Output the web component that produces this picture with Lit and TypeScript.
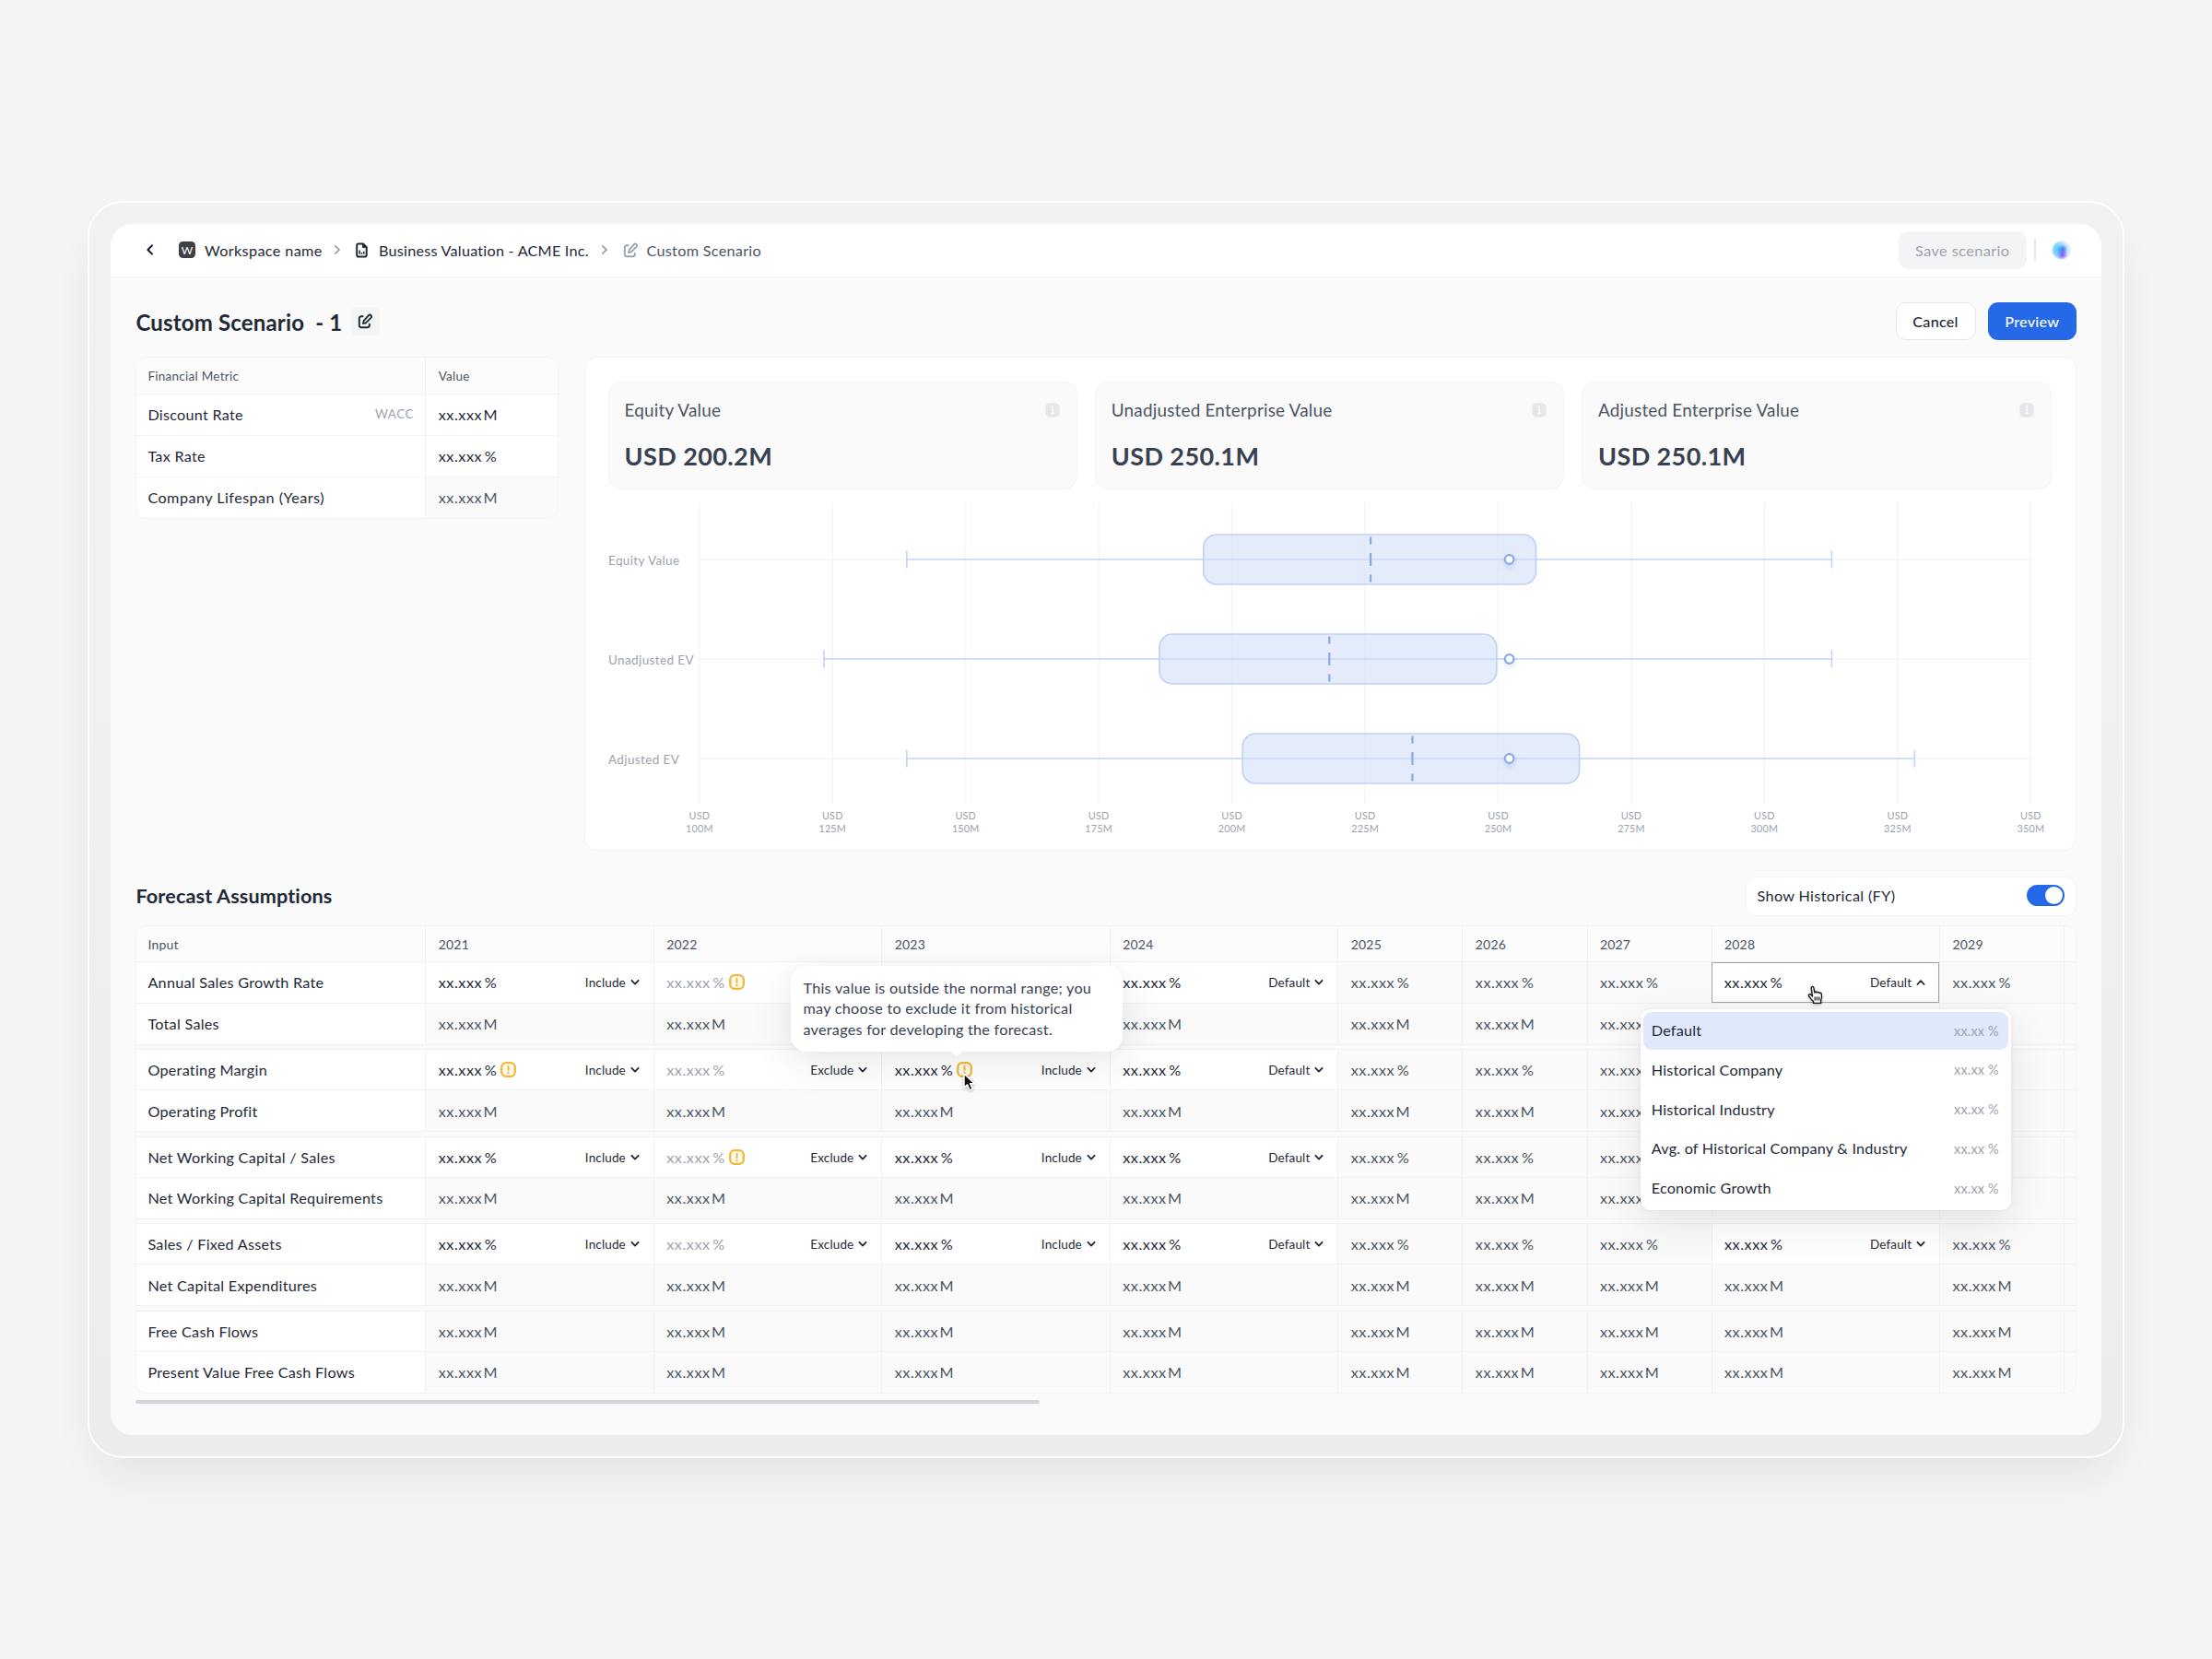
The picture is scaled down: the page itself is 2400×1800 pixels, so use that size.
import { LitElement, html, css, svg, nothing } from "lit";
import { customElement, property } from "lit/decorators.js";
import { classMap } from "lit/directives/class-map.js";

type Cell = {
  value?: string;
  mode?: string;
  muted?: boolean;
  warn?: boolean;
  open?: boolean;
};
type Row = { label: string; cells: Cell[] };

const PCT = "xx.xxx %";
const MIL = "xx.xxx M";
const YEARS = ["2021", "2022", "2023", "2024", "2025", "2026", "2027", "2028", "2029"];

const edit = (mode: string, extra: Partial<Cell> = {}): Cell => ({ value: PCT, mode, ...extra });
const read = (value: string, n: number): Cell[] => Array.from({ length: n }, () => ({ value }));
const blank: Cell = {};

const GROUPS: Row[][] = [
  [
    {
      label: "Annual Sales Growth Rate",
      cells: [
        edit("Include"),
        { value: PCT, mode: "", muted: true, warn: true },
        { mode: "" },
        edit("Default"),
        ...read(PCT, 3),
        edit("Default", { open: true }),
        ...read(PCT, 1),
      ],
    },
    { label: "Total Sales", cells: [...read(MIL, 2), blank, ...read(MIL, 4), blank, blank] },
  ],
  [
    {
      label: "Operating Margin",
      cells: [
        edit("Include", { warn: true }),
        edit("Exclude", { muted: true }),
        edit("Include", { warn: true }),
        edit("Default"),
        ...read(PCT, 3),
        blank,
        blank,
      ],
    },
    { label: "Operating Profit", cells: [...read(MIL, 7), blank, blank] },
  ],
  [
    {
      label: "Net Working Capital / Sales",
      cells: [
        edit("Include"),
        edit("Exclude", { muted: true, warn: true }),
        edit("Include"),
        edit("Default"),
        ...read(PCT, 3),
        blank,
        blank,
      ],
    },
    { label: "Net Working Capital Requirements", cells: [...read(MIL, 7), blank, blank] },
  ],
  [
    {
      label: "Sales / Fixed Assets",
      cells: [
        edit("Include"),
        edit("Exclude", { muted: true }),
        edit("Include"),
        edit("Default"),
        ...read(PCT, 3),
        edit("Default"),
        ...read(PCT, 1),
      ],
    },
    { label: "Net Capital Expenditures", cells: read(MIL, 9) },
  ],
  [
    { label: "Free Cash Flows", cells: read(MIL, 9) },
    { label: "Present Value Free Cash Flows", cells: read(MIL, 9) },
  ],
];

const chevron = (up = false) => html`<svg width="10" height="8" viewBox="0 0 10 8" fill="none">
  <path d=${up ? "M1.4 6 5 2.2 8.6 6" : "M1.4 1.8 5 5.6 8.6 1.8"} stroke="#1f2937" stroke-width="1.8" stroke-linecap="round" stroke-linejoin="round" />
</svg>`;

const crumbArrow = html`<svg width="8" height="12" viewBox="0 0 8 12" fill="none">
  <path d="M1.8 1.8 6 6 1.8 10.2" stroke="#9ca3af" stroke-width="1.8" stroke-linecap="round" stroke-linejoin="round" />
</svg>`;

const pencil = (color: string) => html`<svg width="17" height="17" viewBox="0 0 17 17" fill="none" stroke=${color} stroke-width="1.9" stroke-linecap="round" stroke-linejoin="round">
  <path d="M5.6 3.2H4A2.2 2.2 0 0 0 1.8 5.4V13A2.2 2.2 0 0 0 4 15.2H10.6A2.2 2.2 0 0 0 12.8 13V11.6" />
  <path d="M12 2.2a1.7 1.7 0 0 1 2.6 2.4L8.9 10.4 6 11.1 6.6 8.1z" />
</svg>`;

const warnIcon = html`<svg width="17" height="17" viewBox="0 0 17 17" fill="none">
  <rect x="1.2" y="1.2" width="14.6" height="14.6" rx="4.8" fill="#fffaf0" stroke="#f0ba38" stroke-width="2.3" />
  <path d="M8.5 4.8v4.2" stroke="#f0ba38" stroke-width="2" stroke-linecap="round" />
  <circle cx="8.5" cy="11.9" r="1.2" fill="#f0ba38" />
</svg>`;

const infoIcon = html`<svg width="16" height="16" viewBox="0 0 16 16">
  <rect x="0.3" y="0.3" width="15.4" height="15.4" rx="4.6" fill="#e5e7eb" />
  <circle cx="7.9" cy="4.6" r="1.1" fill="#fff" />
  <path d="M6.7 7.2H8.3V11.3M6.5 11.5H9.7" stroke="#fff" stroke-width="1.4" fill="none" />
</svg>`;

const arrowCursor = html`<svg width="18" height="24" viewBox="0 0 18 24">
  <path d="M2 2V17.2L5.5 13.9 8.2 19.8 11.2 18.4 8.6 12.8H13.2Z" fill="#111" stroke="#fff" stroke-width="1.5" stroke-linejoin="round" />
</svg>`;

const handCursor = html`<svg width="20" height="22" viewBox="0 0 20 22">
  <path d="M5.2 3.1C5 1.4 7.4 1 7.8 2.6L8.9 8C9 6.8 11 6.6 11.3 8 11.7 7 13.5 7.1 13.8 8.5 14.4 7.8 16.1 8.2 16.3 9.7 16.8 12 17 14 15.6 16.4V19.4H7.6V17.6C5.6 15.9 4 13.8 2.6 11.6 1.8 10.1 3.6 9.2 4.8 10.3L6.6 12.1Z" fill="#fff" stroke="#1a1a1a" stroke-width="1.4" stroke-linejoin="round" />
  <path d="M9.2 12.6V16.6M11.4 12.6V16.6M13.6 12.6V16.6" stroke="#1a1a1a" stroke-width="1.2" />
</svg>`;

@customElement("valuation-chart")
export class ValuationChart extends LitElement {
  static styles = css`
    :host { display: block; }
    svg { display: block; }
    text { font-family: Lato, "Open Sans", sans-serif; font-weight: 400; fill: #9ca3af; }
    .name { font-size: 13.5px; letter-spacing: 0.38px; }
    .tick { font-size: 10.8px; letter-spacing: 0.2px; text-anchor: middle; }
    .grid { stroke: #f5f6f8; stroke-width: 1.6; }
    .whisker { stroke: #c3d5f4; stroke-width: 1.6; fill: none; }
    .box { fill: rgba(208, 220, 248, 0.58); stroke: #c0d3f3; stroke-width: 1.7; }
    .median { stroke: #86a9e8; stroke-width: 2.2; }
    .point { fill: #fff; stroke: #86a9e8; stroke-width: 2.2; filter: drop-shadow(0 3px 3px rgba(60, 90, 170, 0.18)); }
  `;

  private rows = [
    { name: "Equity Value", low: 138.95, q1: 194.67, median: 226.05, q3: 257.1, high: 312.65, point: 252.1 },
    { name: "Unadjusted EV", low: 123.4, q1: 186.4, median: 218.3, q3: 249.7, high: 312.65, point: 252.1 },
    { name: "Adjusted EV", low: 138.95, q1: 202, median: 233.9, q3: 265.25, high: 328.2, point: 252.1 },
  ];

  private x(v: number) {
    return 98.8 + (v - 100) * 5.778;
  }

  render() {
    const ticks = Array.from({ length: 11 }, (_, i) => 100 + i * 25);
    return html`<svg width="1565" height="376" viewBox="0 0 1565 376">
      ${ticks.map(
        (t) => svg`<line class="grid" x1=${this.x(t)} x2=${this.x(t)} y1="14" y2="341"></line>
          <text class="tick" x=${this.x(t)} y="358">USD</text>
          <text class="tick" x=${this.x(t)} y="371.5">${t}M</text>`,
      )}
      ${this.rows.map((r, i) => {
        const y = 76 + i * 108;
        const m = this.x(r.median);
        return svg`
          <text class="name" x="0" y=${y + 6}>${r.name}</text>
          <line class="grid" x1="98.5" x2="1543" y1=${y} y2=${y}></line>
          <path class="whisker" d="M${this.x(r.low)} ${y}H${this.x(r.high)}M${this.x(r.low)} ${y - 9.5}v19M${this.x(r.high)} ${y - 9.5}v19"></path>
          <rect class="box" x=${this.x(r.q1)} y=${y - 27} width=${this.x(r.q3) - this.x(r.q1)} height="54" rx="14"></rect>
          <path class="median" d="M${m} ${y - 24.5}v8M${m} ${y - 7}v14M${m} ${y + 16.5}v8"></path>
          <circle class="point" cx=${this.x(r.point)} cy=${y} r="4.8"></circle>`;
      })}
    </svg>`;
  }
}

@customElement("stat-card")
export class StatCard extends LitElement {
  @property() label = "";
  @property() value = "";

  static styles = css`
    :host {
      display: flex; flex-direction: column; justify-content: space-between; box-sizing: border-box;
      height: 117px; padding: 18px 18px 17.5px 17px; border: 1.5px solid #f3f4f6; border-radius: 14px; background: #fafafa;
    }
    .top { display: flex; align-items: center; justify-content: space-between; height: 24px; }
    .label { font-size: 18.9px; letter-spacing: 0.2px; color: #4b5563; }
    .value { font-size: 27px; line-height: 34px; font-weight: 700; letter-spacing: 0.4px; color: #374151; }
  `;

  render() {
    return html`<div class="top"><span class="label">${this.label}</span>${infoIcon}</div>
      <div class="value">${this.value}</div>`;
  }
}

@customElement("app-root")
export class AppRoot extends LitElement {
  static styles = css`
    :host {
      display: block; box-sizing: border-box; width: 2400px; height: 1800px; padding: 218px 95px; overflow: hidden;
      background: #f4f4f6; color: #1f2937;
      font-family: Lato, "Open Sans", sans-serif; font-weight: 400; font-size: 16.2px; letter-spacing: 0.27px;
    }
    * { box-sizing: border-box; }
    svg { display: block; flex: none; }
    .frame {
      width: 2209.5px; height: 1364px; padding: 22.5px 23px; border: 2px solid #fdfdfe; border-radius: 38px;
      background: linear-gradient(#f2f2f4, #efeff1 60%, #ececee);
      box-shadow: 0 26px 50px -14px rgba(30, 32, 50, 0.09);
    }
    .window {
      display: flex; flex-direction: column; height: 1314px; border-radius: 24px; overflow: hidden; background: #fafafa;
    }
    .topbar {
      display: flex; align-items: center; height: 58.5px; padding: 0 33px 0 38px; background: #fff; border-bottom: 1.5px solid #f4f5f6;
    }
    .crumbs { display: flex; align-items: center; flex: 1; }
    .badge {
      display: grid; place-items: center; width: 18px; height: 18px; margin: 0 10px 0 27px; border-radius: 4.5px;
      background: #3f3f46; color: #fff; font-size: 12px; letter-spacing: 0;
    }
    .crumb { width: 128px; letter-spacing: 0.37px; margin-right: 11.5px; white-space: nowrap; }
    .crumb.doc { width: 228px; letter-spacing: 0.24px; margin: 0 13px 0 12px; }
    .crumb.now { margin: 0 0 0 9px; letter-spacing: 0.3px; color: #4b5563; }
    .docicon { margin-left: 16.5px; }
    .penicon { margin-left: 15.5px; }
    .save {
      display: grid; place-items: center; width: 139.5px; height: 40.5px; border-radius: 11px; background: #f3f4f6; color: #9ca3af; letter-spacing: 0.45px;
    }
    .divider { width: 2px; height: 24px; margin: 0 16.5px 0 8px; background: #e5e7eb; }
    .avatar {
      width: 21px; height: 21px; border-radius: 50%; border: 1.5px solid #d9edfc;
      background:
        radial-gradient(circle at 56% 76%, rgba(140, 70, 250, 0.95) 0, rgba(130, 90, 250, 0) 34%),
        radial-gradient(circle at 58% 46%, #3f74f3 0, rgba(70, 120, 245, 0) 36%),
        radial-gradient(circle at 34% 48%, #41c8f8 0, #9adafc 42%, #d9ecfd 66%);
    }
    .content { display: flex; flex-direction: column; padding: 27px 27px 0 27.4px; }
    .heading { display: flex; align-items: center; height: 41px; }
    h1, h2 { margin: 0; font-weight: 700; white-space: pre; }
    h1 { font-size: 24px; letter-spacing: 0.17px; padding-top: 1px; }
    h2 { font-size: 21.6px; letter-spacing: 0.14px; }
    .rename { display: grid; place-items: center; width: 31px; height: 31px; margin-left: 9.5px; border-radius: 6px; background: #f3f4f6; }
    .spacer { flex: 1; }
    .btn { display: grid; place-items: center; height: 41px; border-radius: 11px; font-weight: 500; letter-spacing: 0.22px; }
    .cancel { width: 87px; margin-right: 13.5px; border: 1.5px solid #e5e7eb; background: #fff; }
    .preview { width: 95.5px; background: #2568e8; color: #fff; }
    .overview { display: flex; align-items: flex-start; gap: 28px; margin-top: 18px; }

    .metrics { flex: none; width: 458.2px; border: 1.5px solid #f3f4f6; border-radius: 13px; overflow: hidden; background: #fff; }
    .metric { display: grid; grid-template-columns: 313px 1fr; height: 45px; border-top: 1.5px solid #f3f4f6; }
    .metric.head { height: 39px; border-top: 0; background: #fcfcfd; color: #4b5563; font-size: 13.5px; }
    .metric > div { display: flex; align-items: center; padding: 0 12.5px 2px 12px; }
    .metric.head > div { padding-bottom: 0; }
    .metric > div + div { border-left: 1px solid #f0f1f3; padding-left: 13.3px; }
    .metric .between { justify-content: space-between; }
    .lifespan { letter-spacing: 0.45px; }
    .tag { font-size: 13.5px; color: #9ca3af; letter-spacing: 0.45px; }
    .metric .locked { background: #fafafa; color: #4b5563; }

    .panel { flex: 1; min-width: 0; height: 535.5px; padding: 25.5px 25.8px 0 25px; border: 1.5px solid #f3f4f6; border-radius: 14px; background: #fff; }
    .stats { display: grid; grid-template-columns: repeat(3, 1fr); gap: 18.5px; }

    .forecast { display: flex; align-items: center; height: 43px; margin-top: 28px; }
    .toggle {
      display: flex; align-items: center; justify-content: space-between; width: 359px; height: 43px; padding: 0 11.5px 1px 12px;
      border: 1.5px solid #f4f5f7; border-radius: 11px; background: #fff; letter-spacing: 0.35px;
    }
    .switch { display: flex; justify-content: flex-end; width: 41.5px; height: 23.5px; padding: 2px; border-radius: 12px; background: #2568e8; }
    .knob { width: 19.5px; height: 19.5px; border-radius: 50%; background: #fff; }

    .tablewrap { position: relative; margin-top: 10px; }
    .table { height: 508.5px; border: 1.5px solid #f3f4f6; border-radius: 13px; overflow: hidden; }
    .row {
      display: grid; grid-template-columns: 313px repeat(4, 247.5px) repeat(3, 135.1px) 247.5px 135px 1fr; height: 45px;
      border-bottom: 1px solid #f1f2f4;
    }
    .row.head { height: 39px; background: #fcfcfd; color: #4b5563; font-size: 14px; letter-spacing: 0.2px; }
    .row.head .cell { padding-top: 1px; }
    .group + .group { margin-top: 4.5px; border-top: 1px solid #f1f2f4; }
    .group + .group .row:first-child { height: 44px; }
    .cell { display: flex; align-items: center; padding: 0 15px 0 13.3px; border-left: 1px solid #f0f1f3; color: #4b5563; }
    .cell.label { padding: 0 12px; border-left: 0; background: #fff; color: #1f2937; }
    .head .cell.label { background: none; color: inherit; }
    .cell.editable { background: #fff; color: #1f2937; }
    .num { letter-spacing: 0.55px; word-spacing: -2px; white-space: nowrap; }
    .num.mil { word-spacing: -3.2px; }
    .cell.muted .num { color: #9ca3af; }
    .cell.open { border: 1.5px solid #9ca3af; padding: 0 14px 0 13px; }
    .cell .warn { margin-left: 4px; }
    .mode { display: flex; align-items: center; gap: 5px; margin-left: auto; font-size: 13.5px; padding-top: 1px; letter-spacing: 0.14px; }

    .tooltip {
      position: absolute; left: 710.6px; top: 44px; width: 360px; height: 93px; padding: 13px 13.5px; border-radius: 17px;
      background: #fff; color: #374151; line-height: 22.6px; white-space: pre; letter-spacing: 0.26px;
      box-shadow: 0 12px 44px rgba(30, 35, 50, 0.1), 0 2px 14px rgba(30, 35, 50, 0.025);
    }
    .tooltip::after {
      content: ""; position: absolute; left: 173.5px; top: 92.5px; border: 7px solid transparent; border-top-color: #fff; border-bottom: 0;
    }
    .menu {
      position: absolute; left: 1632.4px; top: 91px; width: 402px; height: 218px; padding: 3px; border-radius: 11px; background: #fff;
      box-shadow: 0 14px 44px rgba(30, 35, 50, 0.1), 0 0 5px rgba(30, 35, 50, 0.06);
    }
    .option {
      display: flex; align-items: center; justify-content: space-between; height: 41px; margin-bottom: 1.75px; padding: 0 10px 1px 9px;
      border-radius: 9px; letter-spacing: 0.2px;
    }
    .option.active { background: #dfe9fb; }
    .hint { font-size: 14.4px; color: #9ca3af; padding-top: 1px; }
    .arrow { position: absolute; left: 897px; top: 159px; filter: drop-shadow(0 1px 1.5px rgba(0, 0, 0, 0.3)); }
    .hand { position: absolute; left: 1813px; top: 65px; filter: drop-shadow(0 1px 1.5px rgba(0, 0, 0, 0.3)); }
    .scroll { width: 981px; height: 4.5px; margin-top: 6.8px; border-radius: 2px; background: #d1d5db; }
  `;

  private value(text: string) {
    return html`<span class=${classMap({ num: true, mil: text.endsWith("M") })}>${text}</span>`;
  }

  private cell(c: Cell) {
    const editable = c.mode !== undefined;
    return html`<div class=${classMap({ cell: true, editable, muted: !!c.muted, open: !!c.open })}>
      ${c.value ? this.value(c.value) : nothing}
      ${c.warn ? html`<span class="warn">${warnIcon}</span>` : nothing}
      ${c.mode ? html`<span class="mode">${c.mode}${chevron(c.open)}</span>` : nothing}
    </div>`;
  }

  render() {
    return html`<div class="frame"><div class="window">
      <div class="topbar">
        <div class="crumbs">
          <svg width="9" height="14" viewBox="0 0 9 14" fill="none"><path d="M7 2.4 2.4 7 7 11.6" stroke="#111827" stroke-width="2" stroke-linecap="round" stroke-linejoin="round" /></svg>
          <span class="badge">W</span><span class="crumb">Workspace name</span>${crumbArrow}
          <svg class="docicon" width="13" height="17" viewBox="0 0 13 17" fill="none" stroke="#1f2937">
            <path d="M3 1.4H8L11.7 5.2V13.8A1.8 1.8 0 0 1 9.9 15.6H3A1.8 1.8 0 0 1 1.2 13.8V3.2A1.8 1.8 0 0 1 3 1.4Z" stroke-width="2" stroke-linejoin="round" />
            <path d="M7.6 1.4V5.6H11.7Z" fill="#1f2937" />
            <path d="M4.2 8.6V12.8M6.5 11V12.8M8.8 9.8V12.8" stroke-width="1.5" />
          </svg>
          <span class="crumb doc">Business Valuation - ACME Inc.</span>${crumbArrow}
          <span class="penicon">${pencil("#9ca3af")}</span><span class="crumb now">Custom Scenario</span>
        </div>
        <div class="save">Save scenario</div>
        <div class="divider"></div>
        <div class="avatar"></div>
      </div>

      <div class="content">
        <div class="heading">
          <h1>Custom Scenario  - 1</h1>
          <div class="rename">${pencil("#1f2937")}</div>
          <div class="spacer"></div>
          <div class="btn cancel">Cancel</div>
          <div class="btn preview">Preview</div>
        </div>

        <div class="overview">
          <div class="metrics">
            <div class="metric head"><div>Financial Metric</div><div>Value</div></div>
            <div class="metric"><div class="between">Discount Rate<span class="tag">WACC</span></div><div>${this.value(MIL)}</div></div>
            <div class="metric"><div>Tax Rate</div><div>${this.value(PCT)}</div></div>
            <div class="metric"><div class="lifespan">Company Lifespan (Years)</div><div class="locked">${this.value(MIL)}</div></div>
          </div>
          <div class="panel">
            <div class="stats">
              <stat-card label="Equity Value" value="USD 200.2M"></stat-card>
              <stat-card label="Unadjusted Enterprise Value" value="USD 250.1M"></stat-card>
              <stat-card label="Adjusted Enterprise Value" value="USD 250.1M"></stat-card>
            </div>
            <valuation-chart></valuation-chart>
          </div>
        </div>

        <div class="forecast">
          <h2>Forecast Assumptions</h2>
          <div class="spacer"></div>
          <div class="toggle">Show Historical (FY)<span class="switch"><span class="knob"></span></span></div>
        </div>

        <div class="tablewrap">
          <div class="table">
            <div class="row head">
              <div class="cell label">Input</div>
              ${YEARS.map((y) => html`<div class="cell">${y}</div>`)}
              <div class="cell"></div>
            </div>
            ${GROUPS.map(
              (g) => html`<div class="group">
                ${g.map(
                  (r) => html`<div class="row">
                    <div class="cell label">${r.label}</div>
                    ${r.cells.map((c) => this.cell(c))}
                    <div class="cell"></div>
                  </div>`,
                )}
              </div>`,
            )}
          </div>

          <div class="tooltip">This value is outside the normal range; you
may choose to exclude it from historical
averages for developing the forecast.</div>

          <div class="menu">
            ${["Default", "Historical Company", "Historical Industry", "Avg. of Historical Company & Industry", "Economic Growth"].map(
              (o, i) => html`<div class=${classMap({ option: true, active: i === 0 })}>${o}<span class="hint">xx.xx %</span></div>`,
            )}
          </div>
          <div class="arrow">${arrowCursor}</div>
          <div class="hand">${handCursor}</div>
        </div>
        <div class="scroll"></div>
      </div>
    </div></div>`;
  }
}
